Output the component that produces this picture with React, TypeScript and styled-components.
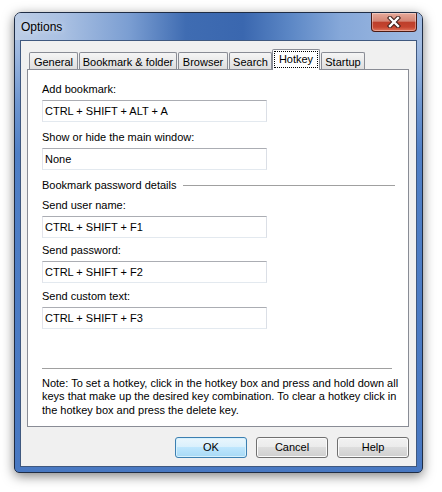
import styled, { createGlobalStyle } from "styled-components";

const GlobalStyle = createGlobalStyle`
  html, body {
    margin: 0;
    padding: 0;
    background: #ffffff;
  }
  body {
    font-family: "Liberation Sans", Arial, sans-serif;
    font-size: 11px;
    color: #000000;
  }
`;

const Page = styled.div`
  width: 442px;
  height: 492px;
  padding: 12px 0 0 14px;
  box-sizing: border-box;
`;

const Window = styled.div`
  width: 409px;
  height: 461px;
  box-sizing: border-box;
  border: 1px solid #1f2d45;
  border-radius: 7px 7px 5px 5px;
  background: linear-gradient(180deg, #b4c8e6 0px, #9db8e0 40px, #6e96d0 90px, #4f7fc6 140px, #4878c2 100%);
  box-shadow: 0 3px 12px rgba(0, 0, 0, 0.5);
  display: flex;
  flex-direction: column;
  overflow: hidden;
`;

const TitleBar = styled.div`
  height: 27px;
  display: flex;
  justify-content: space-between;
  align-items: flex-start;
  background: linear-gradient(90deg, #bccde6 0%, #a9c0e2 12%, #7b9ed2 28%, #3f6cb2 42%, #3a67af 56%, #5d88c6 68%, #86a8d9 80%, #a0bbe2 100%);
`;

const Title = styled.div`
  font-size: 12px;
  line-height: 13px;
  padding: 8px 0 0 6px;
  text-shadow: 0 0 6px rgba(255, 255, 255, 0.8);
`;

const CloseButton = styled.div`
  width: 46px;
  height: 19px;
  margin-right: 5px;
  box-sizing: border-box;
  border: 1px solid #4b1a14;
  border-top: none;
  border-radius: 0 0 4px 4px;
  background: linear-gradient(180deg, #e7aa9b 0%, #d48676 45%, #bd3f2b 52%, #c5442f 78%, #e0765d 100%);
  box-shadow: inset 0 0 0 1px rgba(255, 255, 255, 0.35);
  display: flex;
  align-items: center;
  justify-content: center;
`;

const Client = styled.div`
  height: 427px;
  margin: 0 5px;
  box-sizing: border-box;
  border: 1px solid #3f587f;
  background: #f0f0f0;
  padding: 8px 7px 7px 6px;
  display: flex;
  flex-direction: column;
`;

const TabStrip = styled.div`
  display: flex;
  align-items: flex-end;
  gap: 1px;
  height: 21px;
  padding-left: 2px;
  margin-bottom: -1px;
  position: relative;
  z-index: 1;
`;

const Tab = styled.div<{ w: number; active?: boolean }>`
  width: ${(p) => p.w}px;
  height: ${(p) => (p.active ? 21 : 17)}px;
  margin-bottom: ${(p) => (p.active ? 0 : 1)}px;
  margin-left: ${(p) => (p.active ? -1 : 0)}px;
  box-sizing: border-box;
  border: 1px solid #898c95;
  border-bottom: none;
  border-radius: 2px 2px 0 0;
  background: ${(p) => (p.active ? "#ffffff" : "linear-gradient(180deg, #f5f5f5 0%, #e9e9e9 55%, #dedede 100%)")};
  padding: ${(p) => (p.active ? "1px 1px 0" : "2px 0 0")};
  line-height: 15px;
  text-align: center;
  white-space: nowrap;
`;

const FocusLabel = styled.span`
  display: block;
  height: 17px;
  box-sizing: border-box;
  border: 1px dotted #000000;
  line-height: 15px;
`;

const Panel = styled.div`
  height: 358px;
  box-sizing: border-box;
  border: 1px solid #898c95;
  background: #ffffff;
  padding: 13px 13px 9px 14px;
  display: flex;
  flex-direction: column;
`;

const Label = styled.div<{ top: number }>`
  line-height: 13px;
  margin-top: ${(p) => p.top}px;
`;

const HotkeyBox = styled.div`
  width: 225px;
  height: 22px;
  margin-top: 4px;
  box-sizing: border-box;
  border: 1px solid;
  border-color: #abadb3 #dbdfe6 #e3e9ef #e2e3ea;
  background: #ffffff;
  padding-left: 2px;
  line-height: 20px;
`;

const GroupHeader = styled.div`
  display: flex;
  align-items: center;
  gap: 6px;
  margin-top: 9px;
  line-height: 13px;
`;

const GroupLine = styled.div`
  flex: 1;
  height: 1px;
  background: #a0a0a0;
`;

const NoteSection = styled.div`
  margin-top: auto;
`;

const Separator = styled.div`
  height: 1px;
  margin-right: 3px;
  background: #a0a0a0;
`;

const Note = styled.div`
  margin-top: 8px;
  line-height: 13.5px;
  white-space: nowrap;
`;

const ButtonRow = styled.div`
  display: flex;
  justify-content: flex-end;
  gap: 9px;
  margin-top: 10px;
`;

const Button = styled.div<{ primary?: boolean }>`
  width: 72px;
  height: 21px;
  box-sizing: border-box;
  border: 1px solid ${(p) => (p.primary ? "#3c7fb1" : "#707070")};
  border-radius: 3px;
  background: ${(p) =>
    p.primary
      ? "linear-gradient(180deg, #eaf6fd 0%, #d9f0fc 50%, #bee6fd 50%, #a7d9f5 100%)"
      : "linear-gradient(180deg, #f2f2f2 0%, #ebebeb 50%, #dddddd 50%, #cfcfcf 100%)"};
  box-shadow: inset 0 0 0 1px ${(p) => (p.primary ? "#d6f1fd" : "#fbfbfb")};
  display: flex;
  align-items: center;
  justify-content: center;
  line-height: 13px;
`;

const tabs = [
  { label: "General", w: 49 },
  { label: "Bookmark & folder", w: 98 },
  { label: "Browser", w: 50 },
  { label: "Search", w: 43 },
  { label: "Hotkey", w: 48, active: true },
  { label: "Startup", w: 44 },
];

function CloseIcon() {
  return (
    <svg width="14" height="12" viewBox="0 0 14 12">
      <path d="M3 2 L11 10 M11 2 L3 10" stroke="#3a1b17" strokeWidth="4.4" strokeLinecap="square" />
      <path d="M3 2 L11 10 M11 2 L3 10" stroke="#ffffff" strokeWidth="2.4" strokeLinecap="square" />
    </svg>
  );
}

export default function App() {
  return (
    <Page>
      <GlobalStyle />
      <Window>
        <TitleBar>
          <Title>Options</Title>
          <CloseButton>
            <CloseIcon />
          </CloseButton>
        </TitleBar>
        <Client>
          <TabStrip>
            {tabs.map((t) => (
              <Tab key={t.label} w={t.w} active={t.active}>
                {t.active ? <FocusLabel>{t.label}</FocusLabel> : t.label}
              </Tab>
            ))}
          </TabStrip>
          <Panel>
            <Label top={0}>Add bookmark:</Label>
            <HotkeyBox>CTRL + SHIFT + ALT + A</HotkeyBox>
            <Label top={9}>Show or hide the main window:</Label>
            <HotkeyBox>None</HotkeyBox>
            <GroupHeader>
              <span>Bookmark password details</span>
              <GroupLine />
            </GroupHeader>
            <Label top={7}>Send user name:</Label>
            <HotkeyBox>CTRL + SHIFT + F1</HotkeyBox>
            <Label top={6}>Send password:</Label>
            <HotkeyBox>CTRL + SHIFT + F2</HotkeyBox>
            <Label top={7}>Send custom text:</Label>
            <HotkeyBox>CTRL + SHIFT + F3</HotkeyBox>
            <NoteSection>
              <Separator />
              <Note>
                Note: To set a hotkey, click in the hotkey box and press and hold down all
                <br />
                keys that make up the desired key combination. To clear a hotkey click in
                <br />
                the hotkey box and press the delete key.
              </Note>
            </NoteSection>
          </Panel>
          <ButtonRow>
            <Button primary>OK</Button>
            <Button>Cancel</Button>
            <Button>Help</Button>
          </ButtonRow>
        </Client>
      </Window>
    </Page>
  );
}
